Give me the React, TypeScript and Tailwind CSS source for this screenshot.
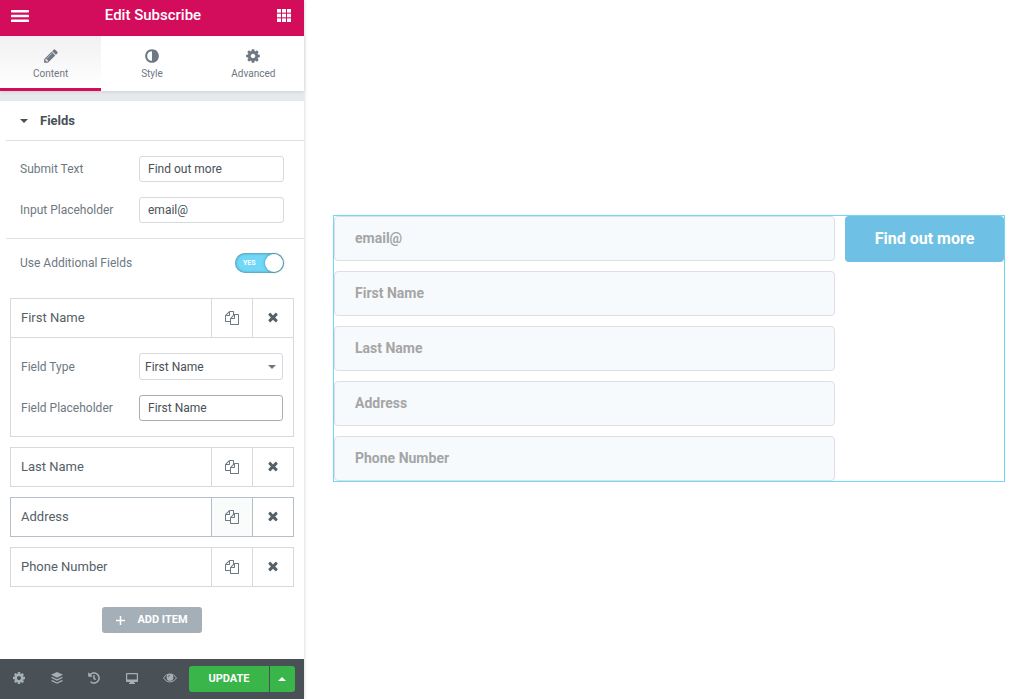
import React, { useState } from "react";
import { FaHistory } from "react-icons/fa";

const PATHS = {
  cog: "M1152 896q0-106-75-181t-181-75-181 75-75 181 75 181 181 75 181-75 75-181zm512-109v222q0 12-8 23t-20 13l-185 28q-19 54-39 91 35 50 107 138 10 12 10 25t-9 23q-27 37-99 108t-94 71q-12 0-26-9l-138-108q-44 23-91 38-16 136-29 186-7 28-36 28h-222q-14 0-24.5-8.5t-11.5-21.5l-28-184q-49-16-90-37l-141 107q-10 9-25 9-14 0-25-11-126-114-165-168-7-10-7-23 0-12 8-23 15-21 51-66.5t54-70.5q-27-50-41-99l-183-27q-13-2-21-12.5t-8-23.5v-222q0-12 8-23t19-13l186-28q14-46 39-92-40-57-107-138-10-12-10-24 0-10 9-23 26-36 98.5-107.5t94.5-71.5q13 0 26 10l138 107q44-23 91-38 16-136 29-186 7-28 36-28h222q14 0 24.5 8.5t11.5 21.5l28 184q49 16 90 37l142-107q9-9 24-9 13 0 25 10 129 119 165 170 7 8 7 22 0 12-8 23-15 21-51 66.5t-54 70.5q26 50 41 98l183 28q13 2 21 12.5t8 23.5z",
  adjust: "M896 1440v-1088q-148 0-273 73t-198 198-73 273 73 273 198 198 273 73zm768-544q0 209-103 385.5t-279.5 279.5-385.5 103-385.5-103-279.5-279.5-103-385.5 103-385.5 279.5-279.5 385.5-103 385.5 103 279.5 279.5 103 385.5z",
  pencil: "M491 1536l91-91-235-235-91 91v107h128v128h107zm523-928q0-22-22-22-10 0-17 7l-542 542q-7 7-7 17 0 22 22 22 10 0 17-7l542-542q7-7 7-17zm-54-192l416 416-832 832h-416v-416zm683 96q0 53-37 90l-166 166-416-416 166-165q36-38 90-38 53 0 91 38l235 234q37 39 37 91z",
  copy: "M1696 384q40 0 68 28t28 68v1216q0 40-28 68t-68 28h-960q-40 0-68-28t-28-68v-288h-544q-40 0-68-28t-28-68v-672q0-40 20-88t48-76l408-408q28-28 76-48t88-20h416q40 0 68 28t28 68v328q68-40 128-40h416zm-544 213l-299 299h299v-299zm-640-384l-299 299h299v-299zm196 647l316-316v-416h-384v416q0 40-28 68t-68 28h-416v640h512v-256q0-40 20-88t48-76zm956 804v-1152h-384v416q0 40-28 68t-68 28h-416v640h896z",
  times: "M1490 1322q0 40-28 68l-136 136q-28 28-68 28t-68-28l-294-294-294 294q-28 28-68 28t-68-28l-136-136q-28-28-28-68t28-68l294-294-294-294q-28-28-28-68t28-68l136-136q28-28 68-28t68 28l294 294 294-294q28-28 68-28t68 28l136 136q28 28 28 68t-28 68l-294 294 294 294q28 28 28 68z",
  eye: "M1664 960q-152-236-381-353 61 104 61 225 0 185-131.5 316.5t-316.5 131.5-316.5-131.5-131.5-316.5q0-121 61-225-229 117-381 353 133 205 333.5 326.5t434.5 121.5 434.5-121.5 333.5-326.5zm-720-384q0-20-14-34t-34-14q-125 0-214.5 89.5t-89.5 214.5q0 20 14 34t34 14 34-14 14-34q0-86 61-147t147-61q20 0 34-14t14-34zm848 384q0 34-20 69-140 230-376.5 368.5t-499.5 138.5-499.5-139-376.5-368q-20-35-20-69t20-69q140-229 376.5-368t499.5-139 499.5 139 376.5 368q20 35 20 69z",
};

function Icon({ name, className }: { name: keyof typeof PATHS; className: string }) {
  return (
    <svg viewBox="0 0 1792 1792" className={className} fill="currentColor" aria-hidden="true">
      <path d={PATHS[name]} />
    </svg>
  );
}

function Tab({ icon, label, active }: { icon: keyof typeof PATHS; label: string; active?: boolean }) {
  return (
    <button
      role="tab"
      aria-selected={!!active}
      className={
        "flex flex-1 flex-col items-center justify-center gap-[2px] border-b-3 pt-[10px] pb-1 text-[#6d7882] " +
        (active
          ? "border-[#d30c5c] bg-linear-to-b from-[#f1f1f1] to-white"
          : "border-transparent")
      }
    >
      <Icon name={icon} className="size-4" />
      <span className="text-[10px] leading-4">{label}</span>
    </button>
  );
}

function ControlRow({ id, label, children }: { id: string; label: string; children: React.ReactNode }) {
  return (
    <div className="flex items-center justify-between">
      <label htmlFor={id} className="text-[12px] text-[#6d7882]">
        {label}
      </label>
      {children}
    </div>
  );
}

const inputClass = "h-[26px] rounded-[3px] border bg-white px-2 text-[12px] text-[#495157] outline-none";

function Repeater({ title, hovered, children }: { title: string; hovered?: boolean; children?: React.ReactNode }) {
  const line = hovered ? "border-[#b4bfc9]" : "border-[#d5dadf]";
  return (
    <div className={"border " + line}>
      <div className="flex h-[38px]">
        <button className="flex-1 px-[10px] text-left text-[13px] text-[#556068]">{title}</button>
        <button
          aria-label={"Duplicate " + title}
          className={
            "flex w-[41px] items-center justify-center border-l text-[#6d7882] " +
            line +
            (hovered ? " bg-[#fafcfc]" : "")
          }
        >
          <Icon name="copy" className="size-[14px]" />
        </button>
        <button
          aria-label={"Remove " + title}
          className={"flex w-[41px] items-center justify-center border-l pb-[2px] text-[#556068] " + line}
        >
          <Icon name="times" className="size-[14px]" />
        </button>
      </div>
      {children}
    </div>
  );
}

function FooterButton({ label, children }: { label: string; children: React.ReactNode }) {
  return (
    <button aria-label={label} className="flex flex-1 items-center justify-center pb-[2px] text-[#a4afb7]">
      {children}
    </button>
  );
}

function Panel() {
  const [submitText, setSubmitText] = useState("Find out more");
  const [placeholder, setPlaceholder] = useState("email@");
  const [fieldPlaceholder, setFieldPlaceholder] = useState("First Name");
  const [additional, setAdditional] = useState(true);

  return (
    <aside className="z-10 flex w-[304px] shrink-0 flex-col bg-white shadow-[0_0_4px_rgba(0,0,0,0.2)]">
      <header className="flex h-9 shrink-0 items-center justify-between bg-[#d30c5c] pr-[13px] pl-[11px] text-white">
        <button aria-label="Menu" className="pb-1">
          <svg viewBox="0 0 18 12" className="h-3 w-[18px]" fill="currentColor" aria-hidden="true">
            <rect width="18" height="2.4" rx="0.6" />
            <rect y="4.8" width="18" height="2.4" rx="0.6" />
            <rect y="9.6" width="18" height="2.4" rx="0.6" />
          </svg>
        </button>
        <h1 className="pb-[6px] text-[15px] font-medium">Edit Subscribe</h1>
        <button aria-label="Widgets" className="pb-[5px]">
          <svg viewBox="0 0 14 13" className="h-[13px] w-[14px]" fill="currentColor" aria-hidden="true">
            {[0, 4.7, 9.4].map((y) =>
              [0, 5, 10].map((x) => <rect key={x + "-" + y} x={x} y={y} width="4" height="3.6" />)
            )}
          </svg>
        </button>
      </header>

      <div role="tablist" className="z-10 flex h-[55px] shrink-0 shadow-[0_1px_3px_rgba(0,0,0,0.1)]">
        <Tab icon="pencil" label="Content" active />
        <Tab icon="adjust" label="Style" />
        <Tab icon="cog" label="Advanced" />
      </div>

      <div className="grow border-t-10 border-[#e6e9ec]">
        <button className="ml-[6px] flex h-[39px] w-full items-center gap-3 pl-[14px] text-[#495157]">
          <svg viewBox="0 0 8 4" className="h-1 w-2" fill="currentColor" aria-hidden="true">
            <path d="M0 0h8L4 4z" />
          </svg>
          <span className="text-[13px] font-bold">Fields</span>
        </button>

        <div className="ml-[6px] flex flex-col gap-[15px] border-y border-[#dfe2e5] py-[15px] pr-5 pl-[14px]">
          <ControlRow id="submit-text" label="Submit Text">
            <input
              id="submit-text"
              value={submitText}
              onChange={(e) => setSubmitText(e.target.value)}
              className={inputClass + " w-[145px] border-[#d5dadf]"}
            />
          </ControlRow>
          <ControlRow id="input-placeholder" label="Input Placeholder">
            <input
              id="input-placeholder"
              value={placeholder}
              onChange={(e) => setPlaceholder(e.target.value)}
              className={inputClass + " w-[145px] border-[#d5dadf]"}
            />
          </ControlRow>
        </div>

        <div className="px-5 pt-[14px] pb-[25px]">
          <ControlRow id="additional" label="Use Additional Fields">
            <span className="relative flex h-5 w-[49px]">
              <input
                id="additional"
                type="checkbox"
                role="switch"
                checked={additional}
                onChange={(e) => setAdditional(e.target.checked)}
                className="peer h-5 w-[49px] appearance-none rounded-full bg-[#a4afb7] shadow-[inset_0_0_3px_rgba(0,0,0,0.5)] checked:bg-[#71d7f7]"
              />
              <span className="pointer-events-none absolute inset-y-0 left-2 flex items-center text-[7px] font-bold text-white">
                {additional ? "YES" : ""}
              </span>
              <span className="pointer-events-none absolute top-px left-px size-[18px] rounded-full bg-white shadow-[0_0_3px_rgba(0,0,0,0.4)] peer-checked:right-px peer-checked:left-auto" />
            </span>
          </ControlRow>
        </div>

        <div className="flex flex-col gap-[10px] px-[10px]">
          <Repeater title="First Name">
            <div className="flex flex-col gap-[15px] border-t border-[#d5dadf] px-[10px] py-[15px]">
              <ControlRow id="field-type" label="Field Type">
                <span className="relative flex">
                  <select
                    id="field-type"
                    defaultValue="First Name"
                    className="h-[27px] w-36 appearance-none rounded-[3px] border border-[#d5dadf] bg-white px-[5px] text-[12px] text-[#495157] outline-none"
                  >
                    <option>First Name</option>
                    <option>Last Name</option>
                    <option>Address</option>
                    <option>Phone Number</option>
                  </select>
                  <svg
                    viewBox="0 0 8 4"
                    className="pointer-events-none absolute top-3 right-[7px] h-1 w-2 text-[#6d7882]"
                    fill="currentColor"
                    aria-hidden="true"
                  >
                    <path d="M0 0h8L4 4z" />
                  </svg>
                </span>
              </ControlRow>
              <ControlRow id="field-placeholder" label="Field Placeholder">
                <input
                  id="field-placeholder"
                  value={fieldPlaceholder}
                  onChange={(e) => setFieldPlaceholder(e.target.value)}
                  className={inputClass + " w-36 border-[#a4afb7]"}
                />
              </ControlRow>
            </div>
          </Repeater>
          <Repeater title="Last Name" />
          <Repeater title="Address" hovered />
          <Repeater title="Phone Number" />
        </div>

        <div className="flex justify-center pt-5">
          <button className="flex h-[26px] w-[100px] items-center justify-center gap-3 rounded-[3px] bg-[#a4afb7] text-[11px] font-bold text-white">
            <svg viewBox="0 0 9 9" className="size-[9px]" fill="none" stroke="currentColor" strokeWidth="1.5" aria-hidden="true">
              <path d="M4.5 0v9M0 4.5h9" />
            </svg>
            <span className="pt-px">ADD ITEM</span>
          </button>
        </div>
      </div>

      <footer className="flex h-10 shrink-0 bg-[#495157] pr-[9px]">
        <FooterButton label="Settings">
          <Icon name="cog" className="size-[14px]" />
        </FooterButton>
        <FooterButton label="Navigator">
          <svg viewBox="0 0 12 12" className="size-3" fill="currentColor" aria-hidden="true">
            <path d="M6 0l6 2.8-6 2.9-6-2.9z" />
            <path d="M1.3 5L6 7.3 10.7 5l1.3.8-6 2.9-6-2.9z" />
            <path d="M1.3 8.1L6 10.4l4.7-2.3 1.3.8-6 2.9-6-2.9z" />
          </svg>
        </FooterButton>
        <FooterButton label="History">
          <FaHistory className="size-3" />
        </FooterButton>
        <FooterButton label="Responsive mode">
          <svg viewBox="0 0 12 11" className="h-[11px] w-3" fill="currentColor" aria-hidden="true">
            <path
              fillRule="evenodd"
              d="M1 0h10a1 1 0 0 1 1 1v7a1 1 0 0 1-1 1H8l.5 1h.5v1H3v-1h.5L4 9H1a1 1 0 0 1-1-1V1a1 1 0 0 1 1-1zm.2 1.2v5.3h9.6V1.2z"
            />
          </svg>
        </FooterButton>
        <FooterButton label="Preview">
          <svg viewBox="0 0 14 10" className="h-[10px] w-[14px]" aria-hidden="true">
            <path d="M.6 5C3.6-.4 10.4-.4 13.4 5 10.4 10.2 3.6 10.2.6 5z" fill="none" stroke="currentColor" />
            <circle cx="7" cy="4.4" r="3.4" fill="currentColor" />
            <path d="M5.2 4.2A1.8 1.8 0 0 1 7 2.4" fill="none" stroke="#495157" strokeWidth="0.7" />
          </svg>
        </FooterButton>
        <div className="flex items-center gap-px text-white">
          <button className="h-[26px] w-20 rounded-l-[3px] bg-[#39b54a] pt-px text-[11px] font-bold">UPDATE</button>
          <button
            aria-label="Save options"
            className="flex h-[26px] w-[25px] items-center justify-center rounded-r-[3px] bg-[#39b54a]"
          >
            <svg viewBox="0 0 8 4" className="h-1 w-2" fill="currentColor" aria-hidden="true">
              <path d="M0 4h8L4 0z" />
            </svg>
          </button>
        </div>
      </footer>
    </aside>
  );
}

const FIELDS = ["email@", "First Name", "Last Name", "Address", "Phone Number"];

export default function App() {
  return (
    <div className="flex min-h-screen bg-white font-['Roboto',sans-serif]">
      <Panel />
      <main className="flex flex-1 items-center pr-[25px] pb-[2px] pl-[29px]">
        <form
          onSubmit={(e) => e.preventDefault()}
          className="flex flex-1 items-start gap-[10px] border border-[#71d7f7]"
        >
          <div className="flex flex-1 flex-col gap-[10px]">
            {FIELDS.map((field) => (
              <input
                key={field}
                aria-label={field}
                placeholder={field}
                className="h-[45px] w-full rounded-[4px] border border-[#dcdfe8] bg-[#f6fafd] px-5 pb-[2px] text-[14px] font-bold text-[#495157] outline-none placeholder:text-[#a5a5a5]"
              />
            ))}
          </div>
          <button className="h-[46px] w-[159px] rounded-[4px] bg-[#6ec1e4] text-[16px] font-bold text-white">
            Find out more
          </button>
        </form>
      </main>
    </div>
  );
}
